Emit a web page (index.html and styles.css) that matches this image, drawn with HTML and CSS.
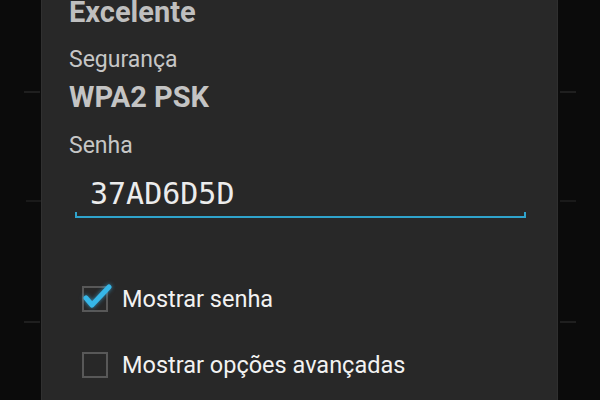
FILE: index.html
```html
<!DOCTYPE html>
<html lang="pt">
<head>
<meta charset="utf-8">
<title>Wi-Fi</title>
<link rel="stylesheet" href="styles.css">
</head>
<body>
<div class="screen">
  <div class="dialog">
    <div class="strength">Excelente</div>
    <div class="label label-security">Segurança</div>
    <div class="value">WPA2 PSK</div>
    <div class="label label-password">Senha</div>
    <div class="input">37AD6D5D</div>
    <div class="check-row row-show">
      <span class="box checked">
        <svg class="tick" width="34" height="30" viewBox="0 0 34 30">
          <path d="M6 14 L12 21 L29 3" fill="none" stroke="#36b7e8" stroke-width="5" stroke-linecap="round" stroke-linejoin="round"/>
        </svg>
      </span>
      <span class="check-label">Mostrar senha</span>
    </div>
    <div class="check-row row-advanced">
      <span class="box"></span>
      <span class="check-label">Mostrar opções avançadas</span>
    </div>
  </div>
</div>
</body>
</html>
```

FILE: styles.css
```css
html, body {
  margin: 0;
  padding: 0;
}
body {
  width: 600px;
  height: 400px;
  overflow: hidden;
  background-color: #0b0b0b;
  background-image:
    linear-gradient(#1f1f1f, #1f1f1f),
    linear-gradient(#1f1f1f, #1f1f1f),
    linear-gradient(#1a1a1a, #1a1a1a),
    linear-gradient(#1a1a1a, #1a1a1a),
    linear-gradient(#1f1f1f, #1f1f1f),
    linear-gradient(#1f1f1f, #1f1f1f);
  background-size: 16px 2px;
  background-repeat: no-repeat;
  background-position:
    24px 91px, 560px 91px,
    26px 200px, 560px 200px,
    24px 321px, 560px 321px;
  font-family: Roboto, "Liberation Sans", sans-serif;
}
.screen {
  display: flex;
  height: 400px;
}
.dialog {
  margin-left: 41px;
  width: 517px;
  height: 400px;
  box-sizing: border-box;
  background: #282828;
  border-left: 1px solid #303030;
  border-right: 1px solid #2f2f2f;
  padding-left: 27px;
}
.strength {
  font-size: 29px;
  font-weight: 700;
  line-height: 24px;
  height: 23px;
  color: #bfbfbf;
}
.label {
  font-size: 23px;
  line-height: 30px;
  color: #c6c6c6;
}
.label-security {
  margin-top: 22px;
}
.value {
  margin-top: 5px;
  font-size: 29px;
  font-weight: 700;
  line-height: 34px;
  color: #c4c4c4;
}
.label-password {
  margin-top: 17px;
}
.input {
  margin-top: 13px;
  margin-left: 6px;
  width: 436px;
  padding: 0 0 4px 15px;
  font-family: "DejaVu Sans Mono", "Liberation Mono", monospace;
  font-size: 30px;
  line-height: 40px;
  color: #ececec;
  background-image:
    linear-gradient(#2fa3cc, #2fa3cc),
    linear-gradient(#2fa3cc, #2fa3cc),
    linear-gradient(#2fa3cc, #2fa3cc);
  background-repeat: no-repeat;
  background-size: 100% 2px, 2px 6px, 2px 6px;
  background-position: left bottom, left bottom, right bottom;
}
.check-row {
  display: flex;
  align-items: center;
  gap: 14px;
  margin-left: 13px;
  height: 30px;
}
.row-show {
  margin-top: 66px;
}
.row-advanced {
  margin-top: 36px;
}
.box {
  position: relative;
  flex: none;
  width: 22px;
  height: 22px;
  border: 2px solid #585858;
}
.tick {
  position: absolute;
  left: -4px;
  top: -4px;
  overflow: visible;
  filter: drop-shadow(0 0 2px rgba(60, 180, 235, 0.7));
}
.check-label {
  font-size: 23.5px;
  line-height: 30px;
  color: #f2f2f2;
}
```
